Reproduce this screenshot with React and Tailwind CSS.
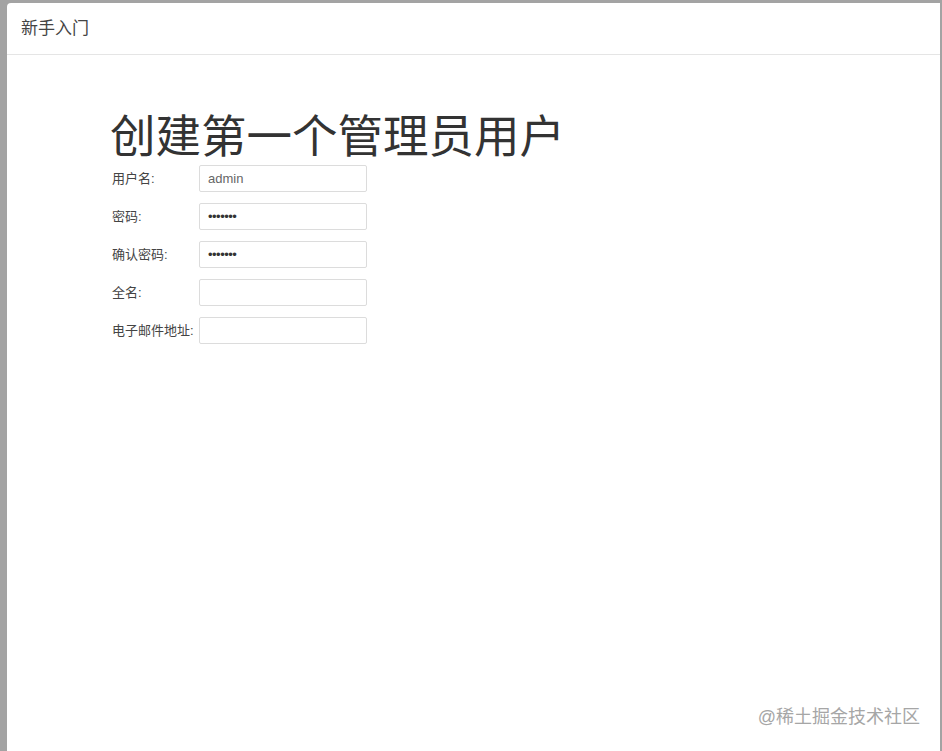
export default function App() {
  const font = { fontFamily: '"Liberation Sans", "Noto Sans CJK SC", sans-serif' };
  const rows = [
    { label: "用户名:", value: "admin", type: "text" },
    { label: "密码:", value: "•••••••", type: "pw" },
    { label: "确认密码:", value: "•••••••", type: "pw" },
    { label: "全名:", value: "", type: "text" },
    { label: "电子邮件地址:", value: "", type: "text" },
  ];
  return (
    <div className="w-[942px] h-[751px] bg-[#a3a3a3] pt-[3px] pl-[7px] pr-[2px] overflow-hidden" style={font}>
      <div className="relative w-full h-full bg-white rounded-tl-[4px] flex flex-col">
        <div className="h-[52px] border-b border-[#e5e5e5] flex items-center pl-[14px] text-[17px] text-[#444]">
          新手入门
        </div>
        <div className="pl-[103px] pt-[55px]">
          <h1 className="text-[45.5px] leading-[56px] text-[#333] font-normal">创建第一个管理员用户</h1>
          <div className="flex flex-col gap-[11px] -mt-[1px]">
            {rows.map((r) => (
              <div key={r.label} className="flex items-center h-[27px]">
                <div className="w-[89px] pl-[2px] text-[13px] text-[#444]">{r.label}</div>
                <div className="w-[168px] h-[27px] border border-[#dcdcdc] rounded-[2px] flex items-center pl-[8px] text-[13px] text-[#666]">
                  {r.type === "pw" ? (
                    <span className="text-[13px] tracking-[-0.5px] text-[#333]">{r.value}</span>
                  ) : (
                    r.value
                  )}
                </div>
              </div>
            ))}
          </div>
        </div>
        <div className="absolute right-[20px] bottom-[20px] text-[18px] text-[#a6a6a6]">@稀土掘金技术社区</div>
      </div>
    </div>
  );
}
